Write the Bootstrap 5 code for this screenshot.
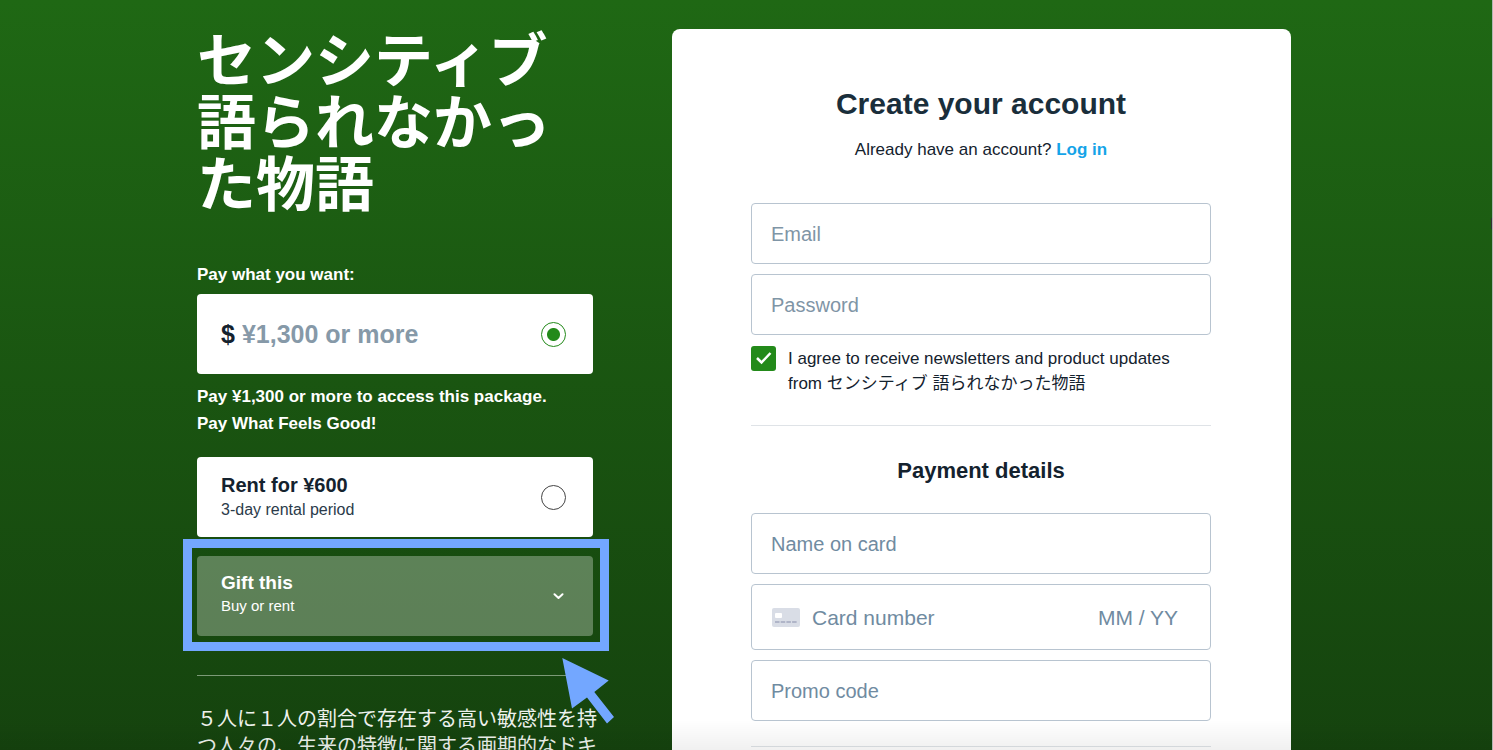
<!DOCTYPE html>
<html lang="en">
<head>
<meta charset="utf-8">
<meta name="viewport" content="width=device-width, initial-scale=1">
<title>センシティブ 語られなかった物語</title>
<link href="https://cdn.jsdelivr.net/npm/bootstrap@5.3.0/dist/css/bootstrap.min.css" rel="stylesheet">
<style>
  :root { --ink: #1a2e3b; --muted: #8699a8; --line: #b8c4d0; --leaf: #238a1a; --mark-blue: #73a7ff; }
  body { font-family: "Liberation Sans", "Noto Sans CJK JP", sans-serif; font-size: 17px; line-height: 25px; color: #14222e; }
  .page { background: linear-gradient(#1f6814, #15430e); border-right: 1px solid #b4b4b4; }
  .page::after { content: ""; position: absolute; inset: auto 0 0; height: 30px; background: linear-gradient(transparent, rgba(0,0,0,.06)); pointer-events: none; }
  .edge-tab { position: absolute; right: 0; top: 218px; width: 1px; height: 11px; background: #333; z-index: 2; }
  .wrap { max-width: 1098px; padding: 26px 4px 0 0; display: grid; grid-template-columns: minmax(0, 396fr) minmax(0, 619fr); column-gap: 79px; }
  .film-title { font: 700 59px/62px "Noto Sans CJK JP", sans-serif; margin: 0 0 50px; }
  .pay-label { margin-bottom: 7px; }
  .offer { height: 80px; padding: 0 27px 0 24px; border-radius: 4px; background: #fff; color: #14222e; }
  .offer-name { font-size: 20px; line-height: 26px; }
  .offer-note { font-size: 16px; line-height: 24px; color: #2b3b4a; }
  .price { font-size: 25px; line-height: 32px; font-weight: 700; gap: 7px; }
  .price input[type="text"] { font: inherit; border: 0; padding: 0; outline: 0; background: transparent; min-width: 0; }
  .price input::placeholder { color: var(--muted); opacity: 1; }
  .form-check-input.pick { width: 25px; height: 25px; margin: 0; border: 1px solid #444; flex: none; }
  .form-check-input.pick:checked { border-color: var(--leaf); background: radial-gradient(circle, var(--leaf) 6px, #fff 7px); }
  .access { line-height: 27px; margin: 9px 0 20px; }
  .gift-slot { margin-top: 19px; }
  .gift { border: 0; background: rgba(255,255,255,.3); color: #fff; padding-right: 29px; }
  .gift-text { padding-bottom: 4px; }
  .gift .offer-name { font-size: 19px; line-height: 24px; }
  .gift .offer-note { font-size: 15px; line-height: 22px; color: #fff; }
  .frame { position: absolute; inset: -17px -16px -15px -14px; border: 9px solid var(--mark-blue); pointer-events: none; }
  .pointer { position: absolute; right: -21px; bottom: -88px; pointer-events: none; z-index: 1; }
  .rule { border: 0; height: 1px; opacity: 1; margin: 39px 0 30px; background: #7c9a77; }
  .story { font-size: 20px; line-height: 27px; color: #eef2ed; }
  .panel { background: #fff; border-radius: 8px; margin-top: 3px; padding: 57px 80px 60px 79px; min-height: 800px; }
  .panel h1 { font-size: 30px; line-height: 36px; font-weight: 700; color: var(--ink); margin: 0 0 15px; }
  .panel h2 { font-size: 22px; line-height: 28px; font-weight: 700; margin: 0 0 28px; }
  .login { color: #15a4e8; font-weight: 700; text-decoration: none; }
  .login-line { margin: 0 0 41px; }
  .fields { gap: 10px; }
  .agree { gap: 12px; padding: 1px 20px 0 0; }
  .field, .card-row { height: 61px; border: 1px solid var(--line); border-radius: 4px; padding: 2px 19px 0; }
  .field { font-size: 20px; }
  .card-row { height: 66px; font-size: 21px; padding: 0 31px 0 20px; }
  .card-row input { font: inherit; border: 0; padding: 0; outline: 0; background: transparent; min-width: 0; }
  .field::placeholder, .card-row input::placeholder { color: #7f95a6; opacity: 1; }
  .late .field::placeholder, .late input::placeholder { color: #708ba1; }
  .month { width: 81px; }
  .form-check-input.tick { width: 25px; height: 25px; margin: 0; border: 0; border-radius: 3px; flex: none; }
  .form-check-input.tick:checked { background-color: var(--leaf); background-size: 25px; background-image: url("data:image/svg+xml,%3Csvg xmlns='http://www.w3.org/2000/svg' viewBox='0 0 25 25'%3E%3Cpath d='M6 12l4.500 4.500L19.500 7' fill='none' stroke='%23fff' stroke-width='2.500'/%3E%3C/svg%3E"); }
  .form-rule { border: 0; height: 1px; opacity: 1; background: #dfe3e7; margin: 29px 0 31px; }
  .form-rule.last { margin-top: 25px; }
</style>
</head>
<body>
<div class="page position-relative vh-100 overflow-hidden">
  <span class="edge-tab"></span>
  <div class="wrap mx-auto">
    <section class="text-white">
      <div class="film-title">センシティブ<br>語られなかっ<br>た物語</div>
      <label for="amount" class="pay-label d-block fw-bold">Pay what you want:</label>
      <div class="offer price d-flex align-items-center">
        <span>$</span>
        <input id="amount" class="flex-grow-1" type="text" placeholder="¥1,300 or more">
        <input class="form-check-input pick" type="radio" name="offer" aria-label="Buy" checked>
      </div>
      <div class="fw-bold access">Pay ¥1,300 or more to access this package.<br>Pay What Feels Good!</div>
      <label class="offer rent d-flex align-items-center justify-content-between">
        <span><span class="offer-name d-block fw-bold">Rent for ¥600</span><span class="offer-note d-block">3-day rental period</span></span>
        <input class="form-check-input pick" type="radio" name="offer">
      </label>
      <div class="position-relative gift-slot">
        <button type="button" class="offer gift w-100 d-flex align-items-center justify-content-between text-start">
          <span class="gift-text"><span class="offer-name d-block fw-bold">Gift this</span><span class="offer-note d-block">Buy or rent</span></span>
          <svg width="11" height="7" viewBox="0 0 11 7" fill="none" stroke="#fff" stroke-width="2" stroke-linecap="round" stroke-linejoin="round"><path d="M1.500 1.300 5.500 5 9.500 1.300"/></svg>
        </button>
        <div class="frame"></div>
        <svg class="pointer" width="52" height="66" viewBox="0 0 52 66" fill="#73a7ff"><path d="M.3 0 46.700 22.500 32.300 34 52 59 45 65.500 25 39.500 10 50.500Z"/></svg>
      </div>
      <hr class="rule">
      <div class="story text-nowrap">５人に１人の割合で存在する高い敏感性を持<br>つ人々の、生来の特徴に関する画期的なドキ</div>
    </section>

    <form class="panel">
      <h1 class="text-center">Create your account</h1>
      <p class="text-center login-line">Already have an account? <a class="login" href="#">Log in</a></p>
      <div class="d-grid fields">
        <input class="field w-100" type="email" placeholder="Email" aria-label="Email">
        <input class="field w-100" type="password" placeholder="Password" aria-label="Password">
        <div class="d-flex agree">
          <input class="form-check-input tick" type="checkbox" id="news" checked>
          <label for="news">I agree to receive newsletters and product updates from センシティブ 語られなかった物語</label>
        </div>
      </div>
      <hr class="form-rule">
      <h2 class="text-center">Payment details</h2>
      <div class="d-grid fields late">
        <input class="field w-100" type="text" placeholder="Name on card" aria-label="Name on card">
        <div class="card-row d-flex align-items-center">
          <svg class="flex-shrink-0 me-2" width="28" height="19" viewBox="0 0 28 19"><rect width="28" height="19" rx="2" fill="#d9dde6"/><rect x="3" y="5" width="7" height="5" rx="1" fill="#fff"/><path d="M3 14h22" stroke="#b0b5c8" stroke-width="2" stroke-dasharray="4.500 1.200"/></svg>
          <input class="flex-grow-1 ms-1" type="text" placeholder="Card number" aria-label="Card number">
          <input class="month" type="text" placeholder="MM / YY" aria-label="Expiry date">
        </div>
        <input class="field w-100" type="text" placeholder="Promo code" aria-label="Promo code">
      </div>
      <hr class="form-rule last">
    </form>
  </div>
</div>
<script src="https://cdn.jsdelivr.net/npm/bootstrap@5.3.0/dist/js/bootstrap.bundle.min.js"></script>
</body>
</html>
